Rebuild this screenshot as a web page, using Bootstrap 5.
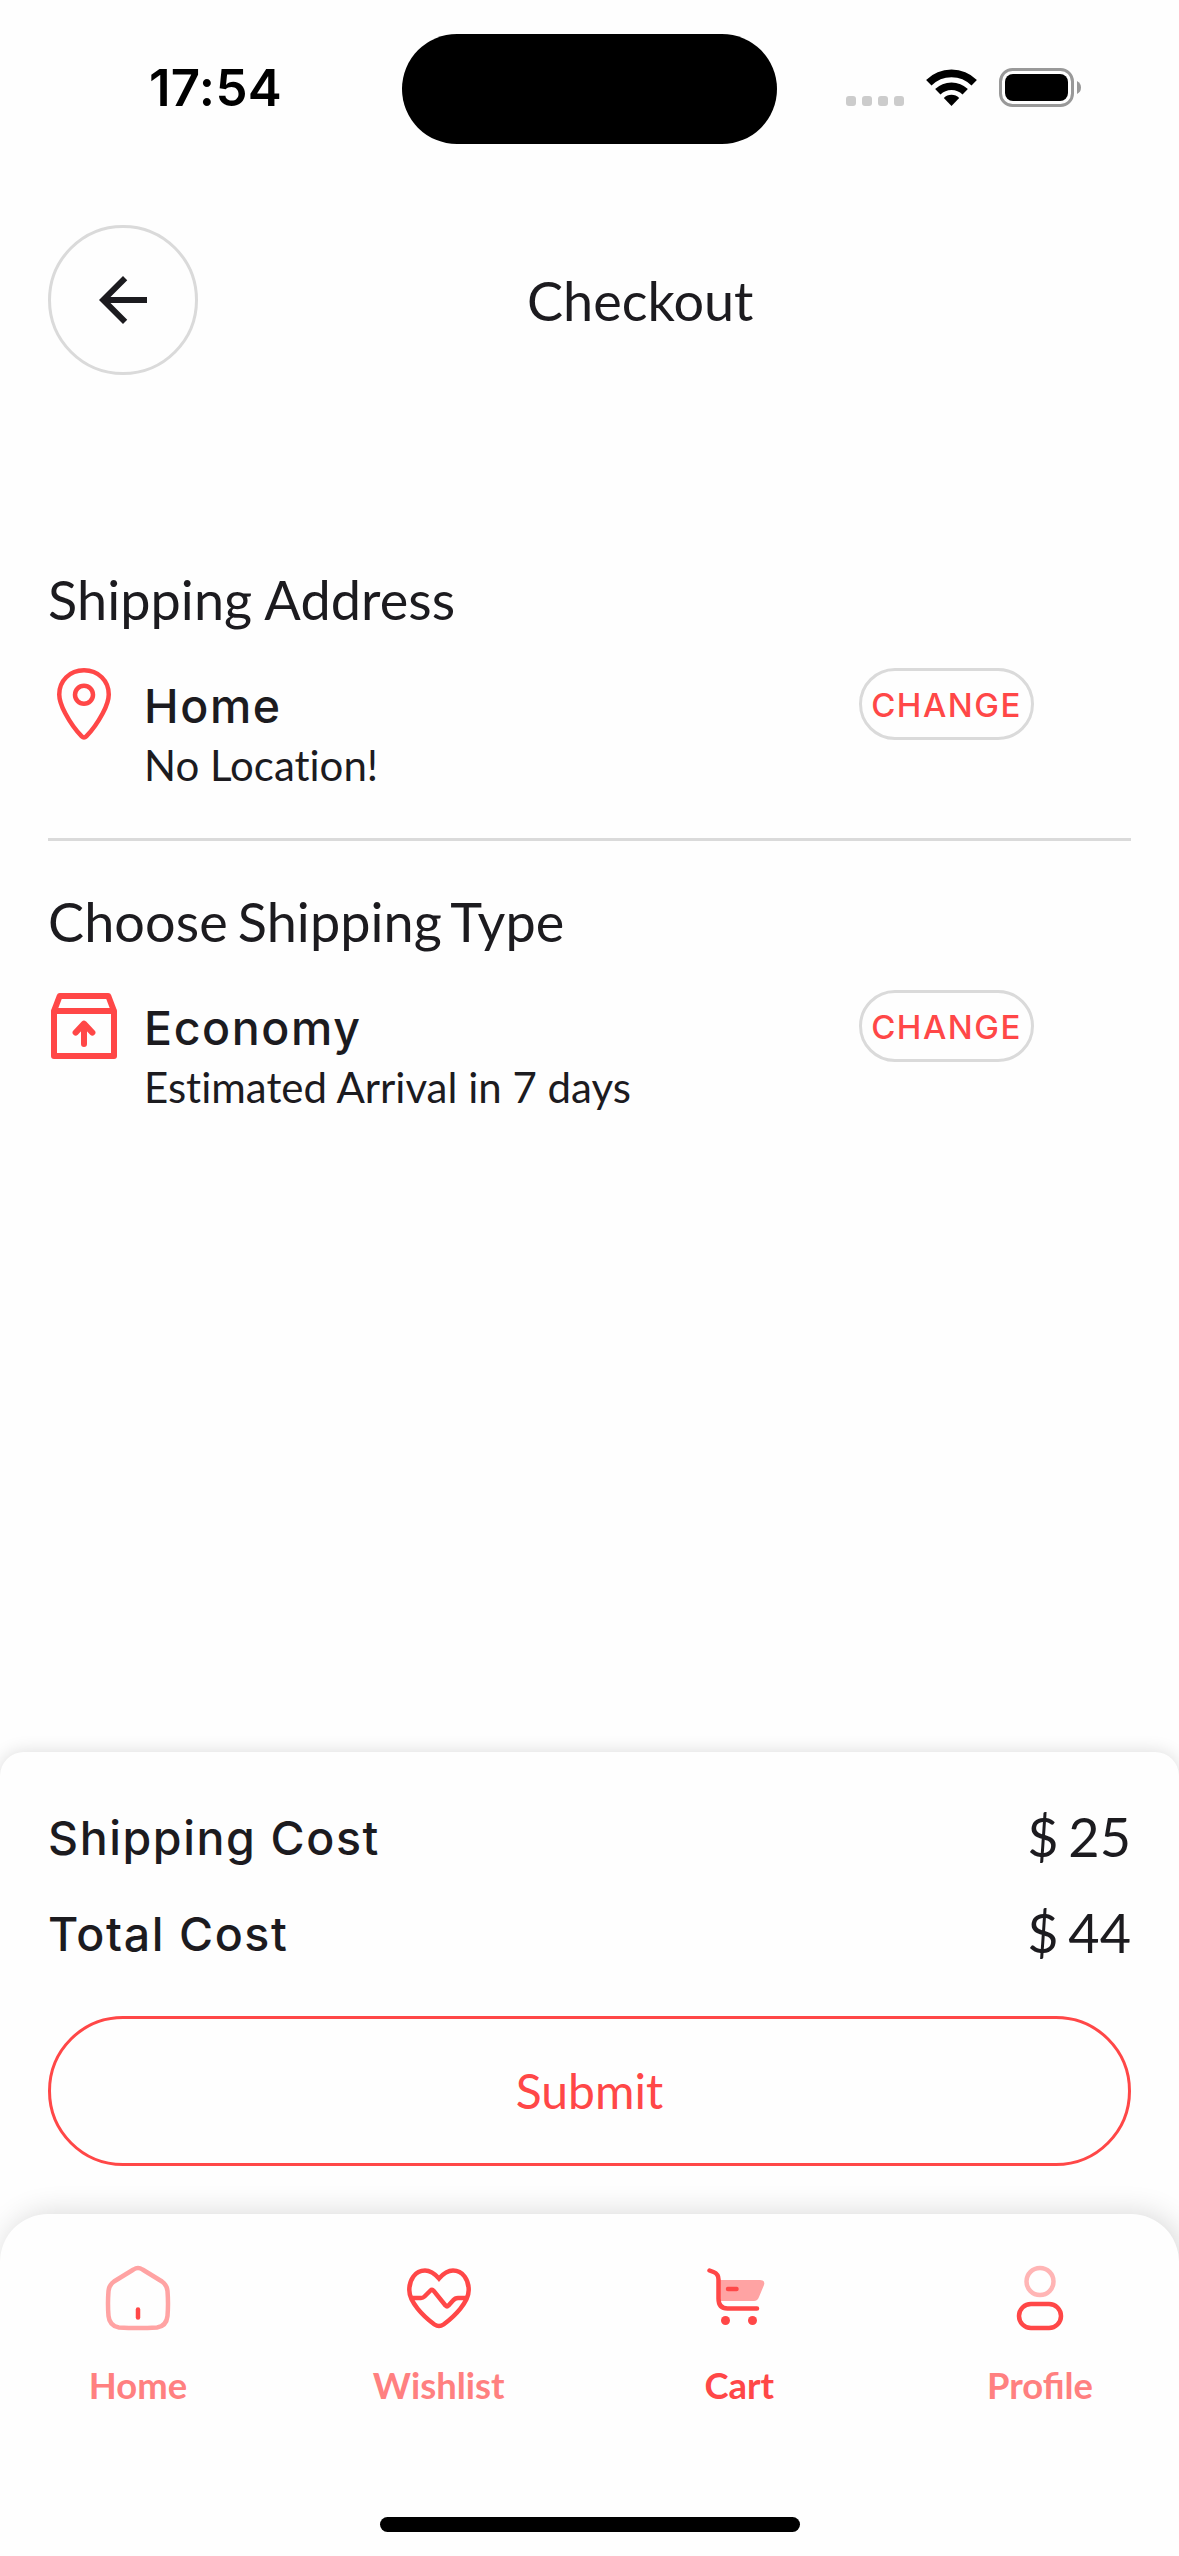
<!DOCTYPE html>
<html lang="en">
<head>
<meta charset="utf-8">
<meta name="viewport" content="width=device-width, initial-scale=1">
<title>Checkout</title>
<link href="https://cdn.jsdelivr.net/npm/bootstrap@5.3.0/dist/css/bootstrap.min.css" rel="stylesheet">
<style>
  :root { --ink: #1c1b1f; --accent: #ff4747; --line: #dadada; --surface: #fefefe; }
  body { font-family: Lato, "Noto Sans", sans-serif; color: var(--ink); background: var(--surface); overflow: hidden; }
  svg { display: block; flex: none; }
  .screen { width: 1179px; height: 2556px; }
  .status-bar { height: 177px; padding: 33px 0 0 149px; }
  .clock { font: 600 51px/110px Inter, sans-serif; color: #000; width: 253px; letter-spacing: .3px; }
  .island { width: 375px; height: 110px; margin-top: 1px; background: #000; }
  .status-icons { height: 111px; padding-left: 69px; }
  .status-icons svg { margin-top: 33px; }
  .top-bar { padding: 48px 48px 0; height: 198px; }
  .back-btn { width: 150px; height: 150px; border: 3px solid var(--line); color: var(--ink); padding: 0; }
  .page-title { font-size: 54px; line-height: 66px; margin: 0; font-weight: 400; width: 604px; padding-top: 1px; }
  .main-pane { padding: 192px 48px 0; }
  .section-title { font-size: 54px; line-height: 66px; font-weight: 400; margin: 0; letter-spacing: .08px; }
  .tight-words { word-spacing: -4px; }
  .option-row { margin-top: 35px; gap: 24px; height: 135px; }
  .option-name { font: 500 46.5px/72px Inter, sans-serif; letter-spacing: 1.6px; }
  .option-note { font-size: 42px; line-height: 50px; font-variant-ligatures: none; margin-top: -2px; }
  .option-text { width: 691px; margin-top: 2px; }
  .change-btn { width: 175px; height: 72px; border: 3px solid var(--line); color: var(--accent); font: 500 33px/68px Inter, sans-serif; letter-spacing: 1.5px; padding: 0; }
  .split { border: 0; height: 3px; background: var(--line); opacity: 1; margin: 35px 0 48px; }
  .cost-pane { height: 510px; padding: 53px 48px 0; background: var(--surface); border-radius: 24px 24px 0 0; box-shadow: 0 0 18px rgba(0,0,0,.14); }
  .cost-row { height: 66px; margin-bottom: 30px; }
  .cost-name { font: 500 46.5px/66px Inter, sans-serif; letter-spacing: 1.6px; }
  .cost-value { font-size: 54px; line-height: 64px; word-spacing: -4px; }
  .submit-btn { height: 150px; border: 3px solid var(--accent); color: var(--accent); font-size: 48px; margin-top: 19px; padding: 0; }
  .tab-pane-bar { height: 342px; margin-top: -48px; padding: 48px 49px 0 48px; background: var(--surface); border-radius: 48px 48px 0 0; box-shadow: 4px 0 30px rgba(0,0,0,.16); }
  .tab-item { width: 180px; font-size: 36.4px; line-height: 44px; font-weight: 700; color: #ff8080; text-decoration: none; gap: 29px; }
  .tab-item.current { color: var(--accent); }
  .home-bar { width: 420px; height: 15px; background: #000; margin: 110px 0 0 332px; }
</style>
</head>
<body>
<div class="screen d-flex flex-column">
  <header class="status-bar d-flex">
    <div class="clock flex-shrink-0">17:54</div>
    <div class="island rounded-pill flex-shrink-0"></div>
    <div class="status-icons d-flex">
      <svg width="240" height="42" viewBox="0 0 240 42">
        <g fill="#ccc"><rect x="0" y="30" width="10" height="10" rx="3"/><rect x="16" y="30" width="10" height="10" rx="3"/><rect x="32" y="30" width="10" height="10" rx="3"/><rect x="48" y="30" width="10" height="10" rx="3"/></g>
        <g fill="none" stroke="#000" stroke-width="7.6"><path d="M82.800 16.800A32 32 0 0 1 128.200 16.800"/><path d="M91.800 25.800A19.500 19.500 0 0 1 119.200 25.800"/></g>
        <path d="M105.500 40l-7.700-8.100a11 11 0 0 1 15.400 0z"/>
        <rect x="154.500" y="3.500" width="72" height="36" rx="12" fill="none" stroke="#999" stroke-width="3"/>
        <rect x="159" y="8" width="63" height="27" rx="8"/>
        <path d="M231 15q4 2 4 6.500t-4 6.500z" fill="#999"/>
      </svg>
    </div>
  </header>

  <div class="top-bar d-flex align-items-center justify-content-between">
    <button class="back-btn btn rounded-circle d-flex align-items-center justify-content-center" aria-label="Back">
      <svg width="72" height="72" viewBox="0 0 24 24" fill="currentColor"><path d="M20 11H7.830l5.590-5.590L12 4l-8 8 8 8 1.410-1.410L7.830 13H20v-2z"/></svg>
    </button>
    <h1 class="page-title">Checkout</h1>
  </div>

  <main class="main-pane flex-grow-1">
    <section>
      <h2 class="section-title">Shipping Address</h2>
      <div class="option-row d-flex align-items-start">
        <svg width="72" height="72" viewBox="0 0 24 24" fill="none" stroke="#ff4747" stroke-width="1.500"><path d="M12 .75C7.200.75 3.750 4.300 3.750 8.800c0 2 .8 4 2 6.300 1.600 3 3.500 5.700 5.500 7.700.5.500 1 .5 1.500 0 2-2 3.900-4.700 5.500-7.700 1.200-2.300 2-4.300 2-6.300C20.250 4.300 16.800.75 12 .75z"/><circle cx="12" cy="8.900" r="3"/></svg>
        <div class="option-text">
          <div class="option-name">Home</div>
          <div class="option-note">No Location!</div>
        </div>
        <button class="change-btn btn rounded-pill">CHANGE</button>
      </div>
    </section>
    <hr class="split">
    <section>
      <h2 class="section-title tight-words">Choose Shipping Type</h2>
      <div class="option-row d-flex align-items-start">
        <svg width="72" height="72" viewBox="0 0 24 24" fill="none" stroke="#ff4747" stroke-width="2" stroke-linejoin="round"><path d="M2 7v15h20V7zM2 7l1.900-5h16.200L22 7"/><path d="M12 18v-6M9.200 14.200L12 11.200l2.800 3" stroke-linecap="round"/></svg>
        <div class="option-text">
          <div class="option-name">Economy</div>
          <div class="option-note">Estimated Arrival in 7 days</div>
        </div>
        <button class="change-btn btn rounded-pill">CHANGE</button>
      </div>
    </section>
  </main>

  <section class="cost-pane">
    <div class="cost-row d-flex justify-content-between"><span class="cost-name">Shipping Cost</span><span class="cost-value">$ 25</span></div>
    <div class="cost-row d-flex justify-content-between"><span class="cost-name">Total Cost</span><span class="cost-value">$ 44</span></div>
    <button class="submit-btn btn rounded-pill w-100">Submit</button>
  </section>

  <nav class="tab-pane-bar position-relative">
    <div class="d-flex justify-content-between">
      <a class="tab-item d-flex flex-column align-items-center" href="#">
        <svg width="72" height="72" viewBox="0 0 72 72" fill="none" stroke-width="4.500" stroke-linecap="round"><path stroke="#ffa3a3" d="M31.500 7.500Q36 4.500 40.500 7.500L60 19.500Q65 23 65.500 29Q66.500 42 65.500 54Q64.500 64 55 65.500Q36 66.500 17 65.500Q7.500 64 6.500 54Q5.500 42 6.500 29Q7 23 12 19.500z"/><path stroke="#ff4747" d="M36 47.500v8"/></svg>
        <span>Home</span>
      </a>
      <a class="tab-item d-flex flex-column align-items-center" href="#">
        <svg width="72" height="72" viewBox="0 0 72 72" fill="none" stroke="#ff4747" stroke-width="4.500" stroke-linejoin="round"><path stroke-linejoin="miter" d="M36 16.500C32 12 28 8.500 22 8.500C12 8.500 6.300 18 6.300 28C6.300 40 20 54 31.500 62.500Q36 65.500 40.500 62.500C52 54 65.700 40 65.700 28C65.700 18 60 8.500 50 8.500C44 8.500 40 12 36 16.500z"/><path d="M9 36h9q2 0 3.500-1.500L27.500 28.500Q29 27 30.500 28.700L42.500 43.500Q44 45 45.500 43.500L50 38.500Q52 36 55 36h8"/></svg>
        <span>Wishlist</span>
      </a>
      <a class="tab-item current d-flex flex-column align-items-center" href="#" aria-current="page">
        <svg width="72" height="72" viewBox="0 0 72 72" fill="none" stroke="#ff4747" stroke-width="4.500" stroke-linecap="round"><path d="M15 18h42q5.500 0 4 5l-5 12q-1.500 4-5 4H16z" fill="#ffa3a3" stroke="none"/><path d="M6.500 8.500l4 1.500q5 2 5 7.500v19q0 10 9 10H54M25 27h8.500"/><circle cx="22.500" cy="58.500" r="4.500" fill="#ff4747" stroke="none"/><circle cx="49.500" cy="58.500" r="4.500" fill="#ff4747" stroke="none"/></svg>
        <span>Cart</span>
      </a>
      <a class="tab-item d-flex flex-column align-items-center" href="#">
        <svg width="72" height="72" viewBox="0 0 72 72" fill="none" stroke-width="4.500"><circle cx="36" cy="19.500" r="13.500" stroke="#ffb5b5"/><rect x="15" y="42" width="42" height="24" rx="12" stroke="#ff4747"/></svg>
        <span>Profile</span>
      </a>
    </div>
    <div class="home-bar rounded-pill"></div>
  </nav>
</div>
<script src="https://cdn.jsdelivr.net/npm/bootstrap@5.3.0/dist/js/bootstrap.bundle.min.js"></script>
</body>
</html>
